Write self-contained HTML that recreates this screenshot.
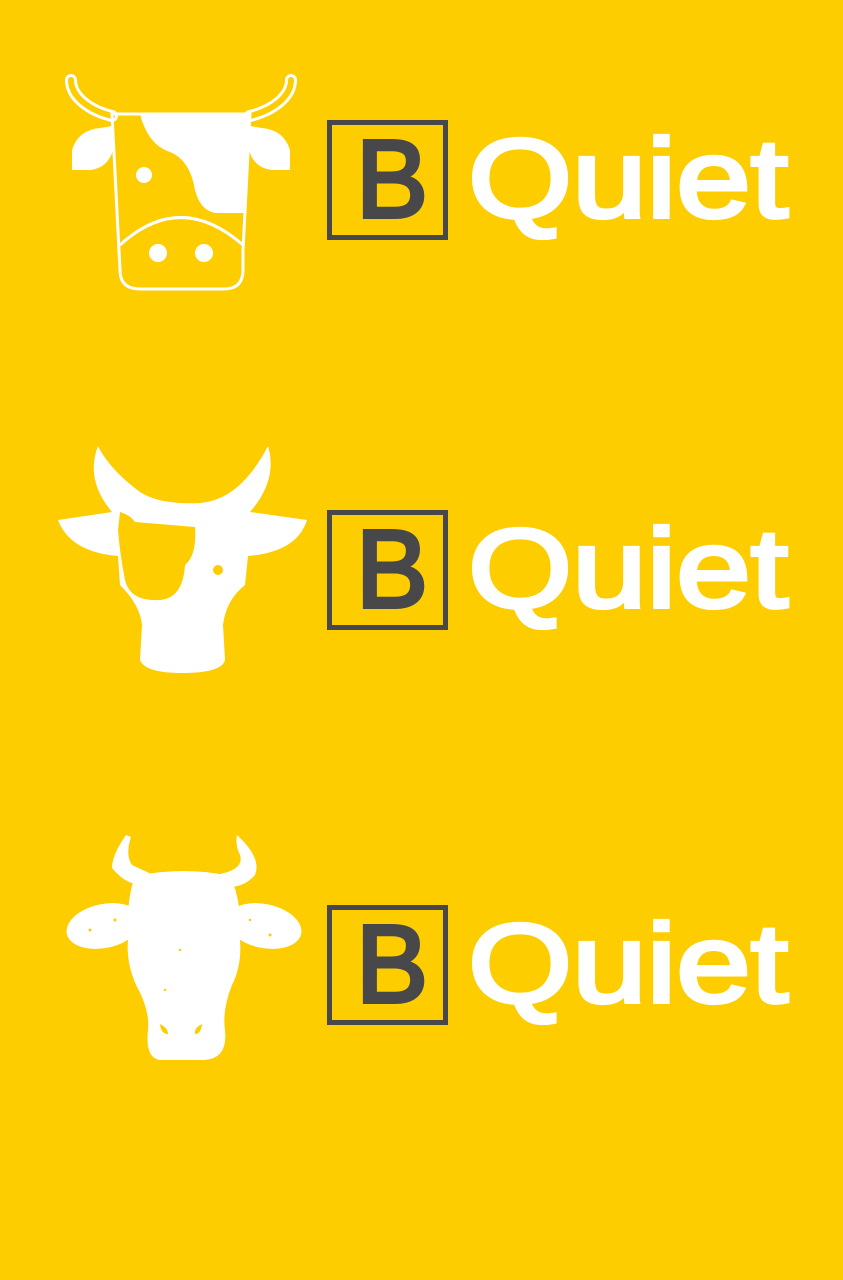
<!DOCTYPE html>
<html><head><meta charset="utf-8"><style>
html,body{margin:0;padding:0;background:#FDCD00;}
svg{display:block}
.q{font-family:"Liberation Sans",sans-serif;font-weight:normal;fill:#fff;stroke:#fff;stroke-width:4;font-size:112px}
.b{font-family:"Liberation Sans",sans-serif;font-weight:normal;fill:#48474a;stroke:#48474a;stroke-width:4;font-size:110px}
</style></head><body>
<svg width="843" height="1280" viewBox="0 0 843 1280" xmlns="http://www.w3.org/2000/svg">
<rect width="843" height="1280" fill="#FDCD00"/>
<!-- cow 1 -->
<g fill="none" stroke-linecap="round">
<path d="M112,116 C88,110 71,96 71,80" stroke="#fff" stroke-width="12"/>
<path d="M112,116 C88,110 71,96 71,80" stroke="#FDCD00" stroke-width="6"/>
<path d="M250,116 C274,110 291,96 291,80" stroke="#fff" stroke-width="12"/>
<path d="M250,116 C274,110 291,96 291,80" stroke="#FDCD00" stroke-width="6"/>
</g>
<g fill="none" stroke="#fff" stroke-width="3">
<path d="M112,114 L250,114 L243,250 L243,270 Q243,289 224,289 L140,289 Q120,289 120,270 Z"/>
<path d="M120,245 Q180,190 243,245"/>
</g>
<g fill="#fff">
<path d="M140,114 L250,114 L246,213 L215,213 Q200,210 195,190 Q190,160 170,152 Q148,145 140,114Z"/>
<path d="M72,170 L72,150 Q78,130 100,128 L112,126 L113,150 Q108,168 90,170Z"/>
<path d="M290,170 L290,150 Q284,130 262,128 L250,126 L249,150 Q254,168 272,170Z"/>
<circle cx="144" cy="175" r="8"/>
<circle cx="158" cy="253" r="9"/><circle cx="204" cy="253" r="9"/>
</g>
<!-- cow 2 -->
<g fill="#fff">
<path d="M98,446 Q85,480 112,512 L58,520 Q70,552 118,556 L120,585 Q140,605 142,625 L140,660 Q145,673 182,673 Q222,673 225,660 L223,625 Q226,600 245,585 L248,556 Q297,552 307,520 L250,512 Q278,480 268,446 Q240,500 200,503 Q160,505 140,492 Q110,470 98,446Z"/>
</g>
<g fill="#FDCD00">
<path d="M120,512 Q130,515 135,522 L195,527 Q197,555 185,565 Q183,598 160,600 Q130,602 125,580 Q120,555 118,530Z"/>
<circle cx="218" cy="570" r="5"/>
</g>
<!-- cow 3 -->
<g fill="#fff">
<path d="M126,835 Q112,855 112,868 Q130,890 150,882 L160,878 L132,865 Q125,855 131,837Z"/>
<path d="M237,835 Q262,858 255,875 Q240,892 215,885 L215,875 Q245,870 240,855 Q235,845 237,835Z"/>
<ellipse cx="104" cy="926" rx="38" ry="22" transform="rotate(-12 104 926)"/>
<ellipse cx="264" cy="926" rx="38" ry="22" transform="rotate(12 264 926)"/>
<path d="M135,876 Q185,866 230,876 Q242,900 240,940 Q242,965 232,985 Q222,1010 225,1030 Q228,1058 205,1060 L160,1060 Q145,1058 148,1030 Q150,1010 136,985 Q126,962 128,940 Q126,900 135,876Z"/>
</g>
<g fill="#FDCD00">
<path d="M160,1024 Q168,1028 168,1034 Q161,1034 160,1024Z"/>
<path d="M202,1024 Q194,1028 195,1034 Q201,1034 202,1024Z"/>
<circle cx="115" cy="920" r="1.5"/><circle cx="90" cy="930" r="1.5"/><circle cx="270" cy="935" r="1.5"/><circle cx="250" cy="920" r="1.2"/><circle cx="180" cy="950" r="1.2"/><circle cx="165" cy="990" r="1.2"/>
</g>
<!-- logos -->
<g>
<rect x="329.5" y="122.5" width="116" height="115" fill="none" stroke="#48474a" stroke-width="5"/>
<text class="b" x="356" y="217" textLength="72" lengthAdjust="spacingAndGlyphs">B</text>
<text class="q" x="468" y="217" textLength="320" lengthAdjust="spacingAndGlyphs">Quiet</text>
</g>
<g>
<rect x="329.5" y="512.5" width="116" height="115" fill="none" stroke="#48474a" stroke-width="5"/>
<text class="b" x="356" y="607" textLength="72" lengthAdjust="spacingAndGlyphs">B</text>
<text class="q" x="468" y="607" textLength="320" lengthAdjust="spacingAndGlyphs">Quiet</text>
</g>
<g>
<rect x="329.5" y="907.5" width="116" height="115" fill="none" stroke="#48474a" stroke-width="5"/>
<text class="b" x="356" y="1002" textLength="72" lengthAdjust="spacingAndGlyphs">B</text>
<text class="q" x="468" y="1002" textLength="320" lengthAdjust="spacingAndGlyphs">Quiet</text>
</g>
</svg>
</body></html>
